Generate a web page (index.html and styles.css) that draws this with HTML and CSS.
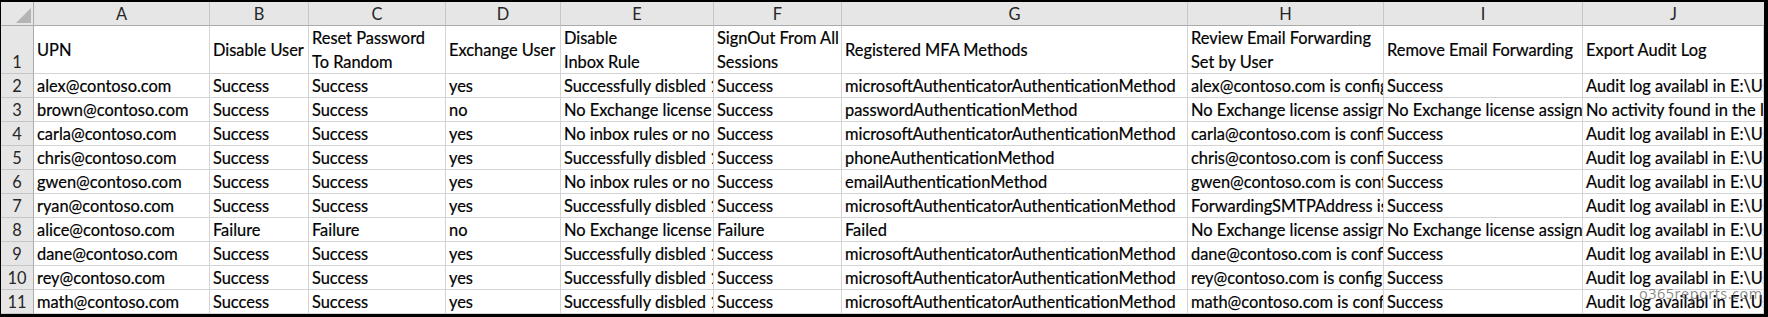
FILE: index.html
```html
<!DOCTYPE html>
<html lang="en">
<head>
    <meta charset="UTF-8">
    <title>Compromised account report</title>
    <link rel="stylesheet" href="styles.css">
</head>
<body>

<div class="frame">
    <div class="sheet">
        <!-- column letters -->
        <div class="corner"><span class="corner-mark"></span></div>
        <div class="colhead">A</div>
        <div class="colhead">B</div>
        <div class="colhead">C</div>
        <div class="colhead">D</div>
        <div class="colhead">E</div>
        <div class="colhead">F</div>
        <div class="colhead">G</div>
        <div class="colhead">H</div>
        <div class="colhead">I</div>
        <div class="colhead last">J</div>

        <!-- row 1: titles -->
        <div class="rowhead">1</div>
        <div class="cell title">UPN</div>
        <div class="cell title">Disable User</div>
        <div class="cell title">Reset Password<br>To Random</div>
        <div class="cell title">Exchange User</div>
        <div class="cell title">Disable<br>Inbox Rule</div>
        <div class="cell title">SignOut From All<br>Sessions</div>
        <div class="cell title">Registered MFA Methods</div>
        <div class="cell title">Review Email Forwarding<br>Set by User</div>
        <div class="cell title">Remove Email Forwarding</div>
        <div class="cell title">Export Audit Log</div>

        <div class="rowhead">2</div>
        <div class="cell">alex@contoso.com</div>
        <div class="cell">Success</div>
        <div class="cell">Success</div>
        <div class="cell">yes</div>
        <div class="cell">Successfully disbled 1 inbox rule(s)</div>
        <div class="cell">Success</div>
        <div class="cell">microsoftAuthenticatorAuthenticationMethod</div>
        <div class="cell">alex@contoso.com is configured with forwarding</div>
        <div class="cell">Success</div>
        <div class="cell">Audit log availabl in E:\Users\admin\AuditLog.csv</div>

        <div class="rowhead">3</div>
        <div class="cell">brown@contoso.com</div>
        <div class="cell">Success</div>
        <div class="cell">Success</div>
        <div class="cell">no</div>
        <div class="cell">No Exchange license assigned</div>
        <div class="cell">Success</div>
        <div class="cell">passwordAuthenticationMethod</div>
        <div class="cell">No Exchange license assigned</div>
        <div class="cell">No Exchange license assigned</div>
        <div class="cell">No activity found in the last 180 days</div>

        <div class="rowhead">4</div>
        <div class="cell">carla@contoso.com</div>
        <div class="cell">Success</div>
        <div class="cell">Success</div>
        <div class="cell">yes</div>
        <div class="cell">No inbox rules or no mailbox</div>
        <div class="cell">Success</div>
        <div class="cell">microsoftAuthenticatorAuthenticationMethod</div>
        <div class="cell">carla@contoso.com is configured with forwarding</div>
        <div class="cell">Success</div>
        <div class="cell">Audit log availabl in E:\Users\admin\AuditLog.csv</div>

        <div class="rowhead">5</div>
        <div class="cell">chris@contoso.com</div>
        <div class="cell">Success</div>
        <div class="cell">Success</div>
        <div class="cell">yes</div>
        <div class="cell">Successfully disbled 1 inbox rule(s)</div>
        <div class="cell">Success</div>
        <div class="cell">phoneAuthenticationMethod</div>
        <div class="cell">chris@contoso.com is configured with forwarding</div>
        <div class="cell">Success</div>
        <div class="cell">Audit log availabl in E:\Users\admin\AuditLog.csv</div>

        <div class="rowhead">6</div>
        <div class="cell">gwen@contoso.com</div>
        <div class="cell">Success</div>
        <div class="cell">Success</div>
        <div class="cell">yes</div>
        <div class="cell">No inbox rules or no mailbox</div>
        <div class="cell">Success</div>
        <div class="cell">emailAuthenticationMethod</div>
        <div class="cell">gwen@contoso.com is configured with forwarding</div>
        <div class="cell">Success</div>
        <div class="cell">Audit log availabl in E:\Users\admin\AuditLog.csv</div>

        <div class="rowhead">7</div>
        <div class="cell">ryan@contoso.com</div>
        <div class="cell">Success</div>
        <div class="cell">Success</div>
        <div class="cell">yes</div>
        <div class="cell">Successfully disbled 1 inbox rule(s)</div>
        <div class="cell">Success</div>
        <div class="cell">microsoftAuthenticatorAuthenticationMethod</div>
        <div class="cell">ForwardingSMTPAddress is configured</div>
        <div class="cell">Success</div>
        <div class="cell">Audit log availabl in E:\Users\admin\AuditLog.csv</div>

        <div class="rowhead">8</div>
        <div class="cell">alice@contoso.com</div>
        <div class="cell">Failure</div>
        <div class="cell">Failure</div>
        <div class="cell">no</div>
        <div class="cell">No Exchange license assigned</div>
        <div class="cell">Failure</div>
        <div class="cell">Failed</div>
        <div class="cell">No Exchange license assigned</div>
        <div class="cell">No Exchange license assigned</div>
        <div class="cell">Audit log availabl in E:\Users\admin\AuditLog.csv</div>

        <div class="rowhead">9</div>
        <div class="cell">dane@contoso.com</div>
        <div class="cell">Success</div>
        <div class="cell">Success</div>
        <div class="cell">yes</div>
        <div class="cell">Successfully disbled 1 inbox rule(s)</div>
        <div class="cell">Success</div>
        <div class="cell">microsoftAuthenticatorAuthenticationMethod</div>
        <div class="cell">dane@contoso.com is configured with forwarding</div>
        <div class="cell">Success</div>
        <div class="cell">Audit log availabl in E:\Users\admin\AuditLog.csv</div>

        <div class="rowhead">10</div>
        <div class="cell">rey@contoso.com</div>
        <div class="cell">Success</div>
        <div class="cell">Success</div>
        <div class="cell">yes</div>
        <div class="cell">Successfully disbled 1 inbox rule(s)</div>
        <div class="cell">Success</div>
        <div class="cell">microsoftAuthenticatorAuthenticationMethod</div>
        <div class="cell">rey@contoso.com is configured with forwarding</div>
        <div class="cell">Success</div>
        <div class="cell">Audit log availabl in E:\Users\admin\AuditLog.csv</div>

        <div class="rowhead">11</div>
        <div class="cell">math@contoso.com</div>
        <div class="cell">Success</div>
        <div class="cell">Success</div>
        <div class="cell">yes</div>
        <div class="cell">Successfully disbled 1 inbox rule(s)</div>
        <div class="cell">Success</div>
        <div class="cell">microsoftAuthenticatorAuthenticationMethod</div>
        <div class="cell">math@contoso.com is configured with forwarding</div>
        <div class="cell">Success</div>
        <div class="cell">Audit log availabl in E:\Users\admin\AuditLog.csv</div>

        <div class="watermark">o365reports.com</div>
    </div>
</div>

</body>
</html>
```

FILE: styles.css
```css
body {
    margin: 0;
    padding: 0;
    background: #000;
    font-family: 'Lato', 'Liberation Sans', sans-serif;
    color: #000;
}
.frame {
    padding: 2px 4px 3px 1px;
    height: 317px;
    box-sizing: border-box;
    overflow: hidden;
}
.sheet {
    position: relative;
    display: grid;
    grid-template-columns: 33px 176px 99px 137px 115px 153px 128px 346px 196px 199px 181px;
    grid-template-rows: 24px 48px repeat(10, 24px);
    background: #fff;
    overflow: hidden;
    height: 312px;
}
.sheet > div {
    box-sizing: border-box;
    min-width: 0;
}
.corner {
    background: #e6e6e6;
    border-right: 1px solid #ababab;
    border-bottom: 1px solid #ababab;
    display: flex;
    justify-content: flex-end;
    align-items: flex-end;
    padding: 0 2px 2px 0;
}
.corner-mark {
    width: 0;
    height: 0;
    border-left: 15px solid transparent;
    border-bottom: 15px solid #b4b4b4;
}
.colhead {
    background: #e6e6e6;
    border-right: 1px solid #c6c6c6;
    border-bottom: 1px solid #ababab;
    color: #262626;
    font-size: 16.4px;
    line-height: 23px;
    text-align: center;
}
.colhead.last {
    border-right: none;
}
.rowhead {
    background: #e6e6e6;
    border-right: 1px solid #ababab;
    border-bottom: 1px solid #c6c6c6;
    color: #262626;
    font-size: 16.4px;
    line-height: 23px;
    text-align: center;
    display: flex;
    align-items: flex-end;
    justify-content: center;
}
.cell {
    border-right: 1px solid #d4d4d4;
    border-bottom: 1px solid #d4d4d4;
    font-size: 16.4px;
    line-height: 23px;
    padding: 0 0 0 3px;
    white-space: nowrap;
    overflow: hidden;
    display: flex;
    align-items: flex-end;
    -webkit-text-stroke: 0.2px #000;
}
.cell.title {
    align-items: center;
    line-height: 24px;
}
.watermark {
    position: absolute;
    left: 1638px;
    top: 282px;
    font-family: 'Open Sans', sans-serif;
    font-size: 14.5px;
    letter-spacing: 0.5px;
    color: rgba(95, 95, 95, 0.75);
    pointer-events: none;
}
```
